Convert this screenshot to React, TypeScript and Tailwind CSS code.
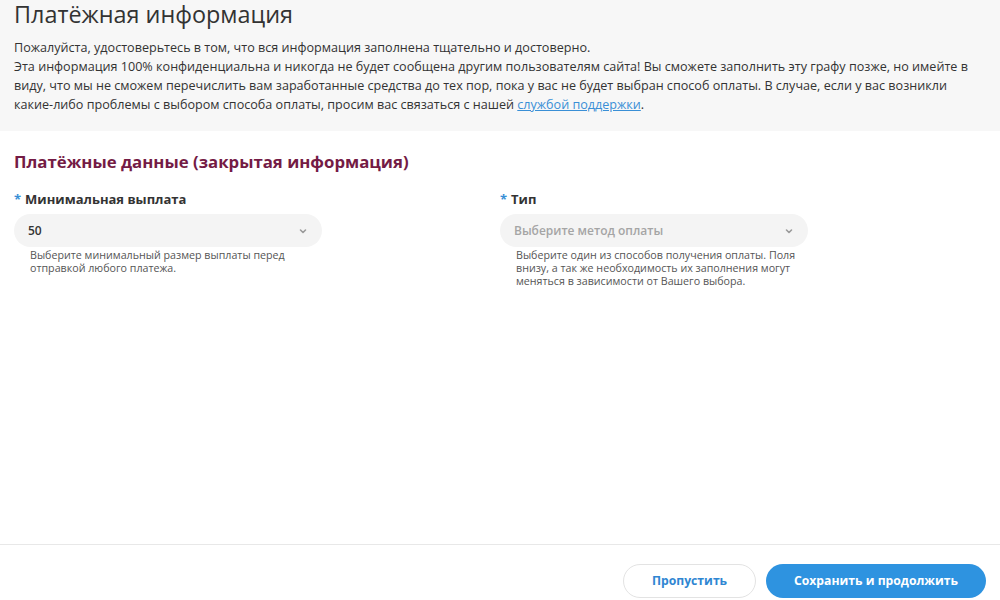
import React from "react";

function Chevron() {
  return (
    <svg width="10" height="10" viewBox="0 0 10 10" fill="none" className="shrink-0">
      <path d="M2.5 4l2.5 2.5L7.5 4" stroke="#9a9a9a" strokeWidth="1.6" strokeLinecap="round" strokeLinejoin="round" />
    </svg>
  );
}

function Field({
  label,
  value,
  placeholder,
  help,
}: {
  label: string;
  value?: string;
  placeholder?: string;
  help: string;
}) {
  return (
    <div className="w-[308px]">
      <div className="text-[13px] leading-[18px] font-bold text-[#333]">
        <span className="text-[#3a8fd6] mr-[4px]">*</span>
        {label}
      </div>
      <div className="mt-[6px] h-[33px] rounded-full bg-[#f4f4f4] flex items-center justify-between pl-[14px] pr-[14px]">
        {value ? (
          <span className="text-[12px] font-semibold text-[#333]">{value}</span>
        ) : (
          <span className="text-[12px] font-semibold text-[#a5a5a5]">{placeholder}</span>
        )}
        <Chevron />
      </div>
      <p className="mt-[2px] pl-4 pr-[2px] text-[10.7px] leading-[13px] text-[#555]">{help}</p>
    </div>
  );
}

export default function App() {
  return (
    <div
      className="h-[600px] w-[1000px] flex flex-col bg-white text-[#333]"
      style={{ fontFamily: '"Open Sans", "Noto Sans", sans-serif' }}
    >
      <header className="h-[131px] bg-[#f7f7f7] px-[14px] shrink-0">
        <h1 className="text-[23.4px] leading-[28px] font-normal text-[#333]">Платёжная информация</h1>
        <p className="mt-[10px] text-[12.6px] leading-[19px] text-[#333]">
          Пожалуйста, удостоверьтесь в том, что вся информация заполнена тщательно и достоверно.
          <br />
          Эта информация 100% конфиденциальна и никогда не будет сообщена другим пользователям сайта! Вы сможете
          заполнить эту графу позже, но имейте в виду, что мы не сможем перечислить вам заработанные средства до тех
          пор, пока у вас не будет выбран способ оплаты. В случае, если у вас возникли какие-либо проблемы с выбором
          способа оплаты, просим вас связаться с нашей{" "}
          <a href="#" className="text-[#3a8fd6] underline">
            службой поддержки
          </a>
          .
        </p>
      </header>

      <main className="flex-1 px-[14px] pt-[19px]">
        <h2 className="text-[16.8px] leading-[24px] font-bold text-[#741b45]">Платёжные данные (закрытая информация)</h2>
        <div className="mt-[16px] grid grid-cols-2">
          <Field
            label="Минимальная выплата"
            value="50"
            help="Выберите минимальный размер выплаты перед отправкой любого платежа."
          />
          <Field
            label="Тип"
            placeholder="Выберите метод оплаты"
            help="Выберите один из способов получения оплаты. Поля внизу, а так же необходимость их заполнения могут меняться в зависимости от Вашего выбора."
          />
        </div>
      </main>

      <footer className="h-[56px] border-t border-[#e8e8e8] flex justify-end items-start pt-[19px] pr-[14px] gap-[10px] shrink-0">
        <button className="h-[34px] w-[133px] rounded-full border border-[#e3e3e3] bg-white text-[12.2px] font-bold text-[#2f86d2]">
          Пропустить
        </button>
        <button className="h-[34px] w-[220px] rounded-full bg-[#2e93e0] text-[12.2px] font-bold text-white">
          Сохранить и продолжить
        </button>
      </footer>
    </div>
  );
}
